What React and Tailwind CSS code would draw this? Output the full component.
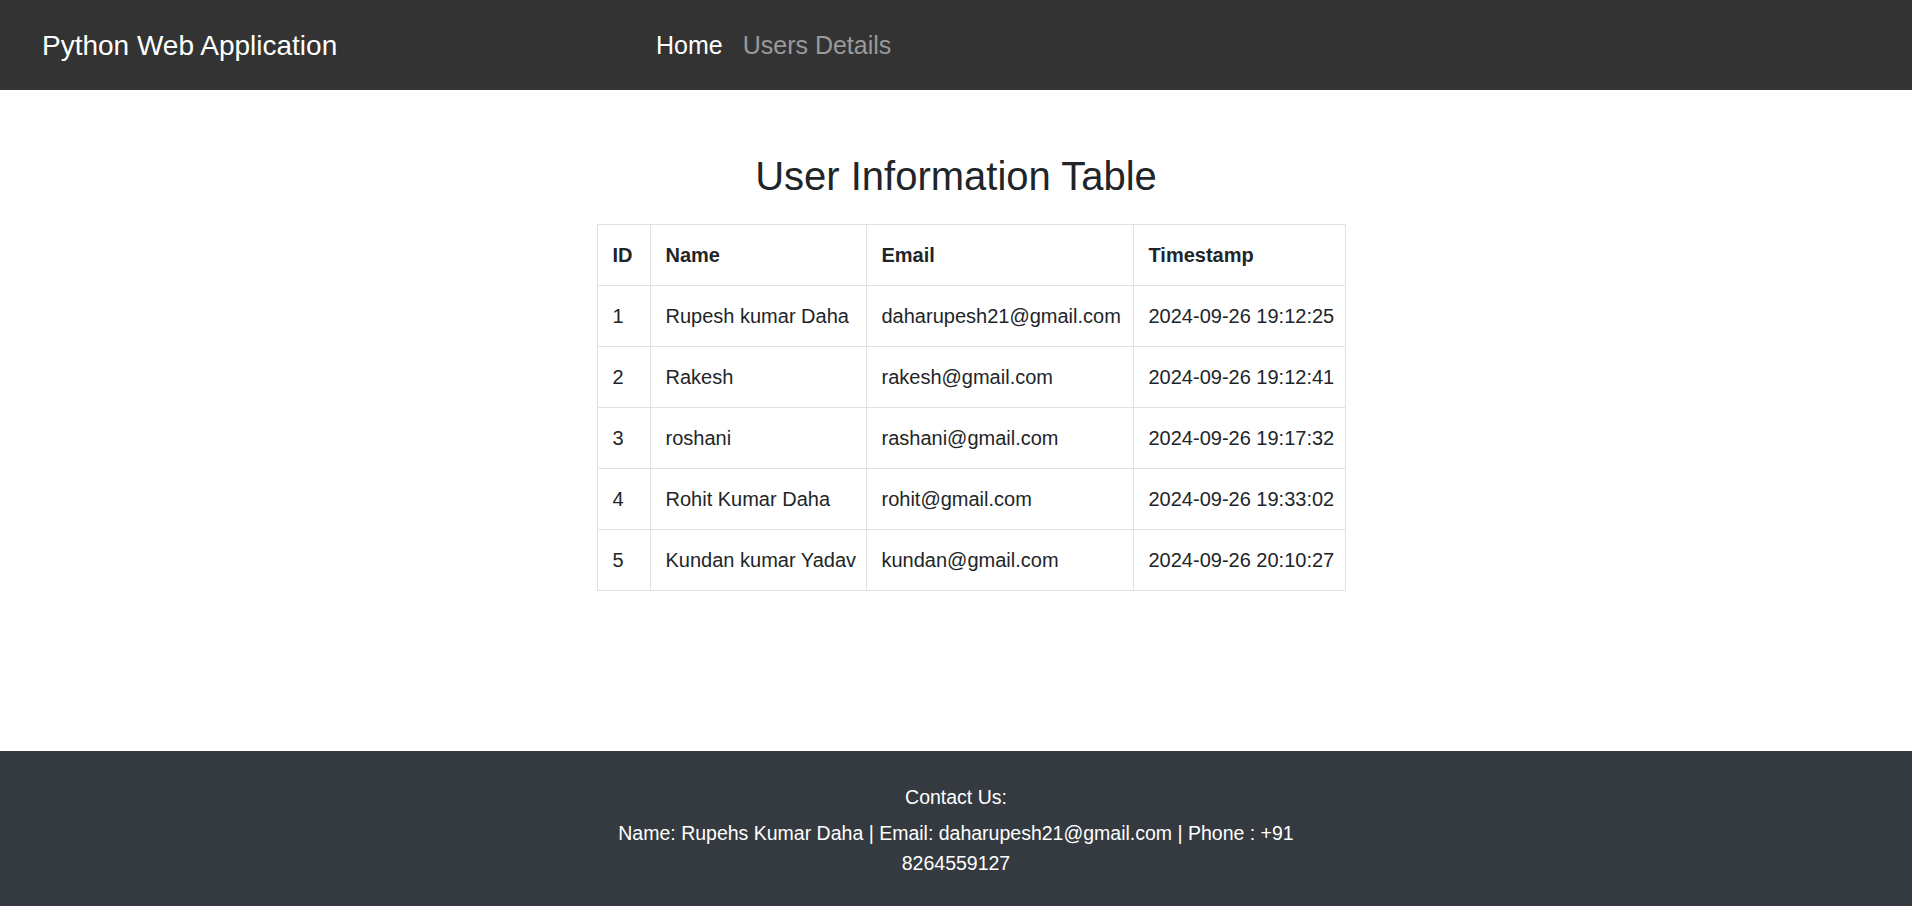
import React from "react";

const users = [
  { id: 1, name: "Rupesh kumar Daha", email: "daharupesh21@gmail.com", ts: "2024-09-26 19:12:25" },
  { id: 2, name: "Rakesh", email: "rakesh@gmail.com", ts: "2024-09-26 19:12:41" },
  { id: 3, name: "roshani", email: "rashani@gmail.com", ts: "2024-09-26 19:17:32" },
  { id: 4, name: "Rohit Kumar Daha", email: "rohit@gmail.com", ts: "2024-09-26 19:33:02" },
  { id: 5, name: "Kundan kumar Yadav", email: "kundan@gmail.com", ts: "2024-09-26 20:10:27" },
];

const cell = "border border-[#dee2e6] px-[15px] py-[15px] leading-[30px] text-left whitespace-nowrap overflow-visible";

export default function App() {
  return (
    <div
      className="min-h-screen flex flex-col bg-white text-[#212529]"
      style={{ fontFamily: '"Liberation Sans", Arial, sans-serif' }}
    >
      {/* Navbar */}
      <header className="h-[90px] bg-[#333333] flex items-center px-[40px]">
        <div className="w-[606px] text-[28px] text-white leading-none pl-[2px] pt-[2px]">Python Web Application</div>
        <nav className="flex items-center text-[25px] leading-none">
          <a className="px-[10px] text-white" href="#">Home</a>
          <a className="px-[10px] text-white/50" href="#">Users Details</a>
        </nav>
      </header>

      {/* Main */}
      <main className="flex-1 pt-[62px]">
        <h2 className="text-center text-[40px] leading-[48px] font-normal mb-[24px]">User Information Table</h2>
        <div className="flex justify-center pl-[30px]">
          <table className="table-fixed border-collapse w-[748px] text-[20px]">
            <colgroup>
              <col className="w-[53px]" />
              <col className="w-[216px]" />
              <col className="w-[267px]" />
              <col className="w-[212px]" />
            </colgroup>
            <thead>
              <tr>
                <th className={`${cell} font-bold`}>ID</th>
                <th className={`${cell} font-bold`}>Name</th>
                <th className={`${cell} font-bold`}>Email</th>
                <th className={`${cell} font-bold`}>Timestamp</th>
              </tr>
            </thead>
            <tbody>
              {users.map((u) => (
                <tr key={u.id}>
                  <td className={cell}>{u.id}</td>
                  <td className={cell}>{u.name}</td>
                  <td className={cell}>{u.email}</td>
                  <td className={cell}>{u.ts}</td>
                </tr>
              ))}
            </tbody>
          </table>
        </div>
      </main>

      {/* Footer */}
      <footer className="bg-[#343a40] text-white text-center text-[19.5px] leading-[30px] pt-[31px] pb-[28px]">
        <p className="mb-[6px]">Contact Us:</p>
        <p className="max-w-[720px] mx-auto">
          Name: Rupehs Kumar Daha | Email: daharupesh21@gmail.com | Phone : +91 8264559127
        </p>
      </footer>
    </div>
  );
}
